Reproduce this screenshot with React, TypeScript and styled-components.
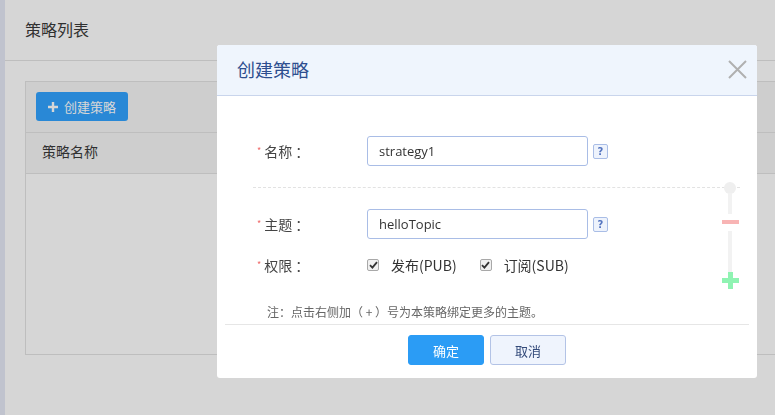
import { createGlobalStyle } from "styled-components";
import styled from "styled-components";

const GlobalStyle = createGlobalStyle`
  html, body {
    margin: 0;
    padding: 0;
    height: 100%;
    overflow: hidden;
  }
  body {
    font-family: "Noto Sans CJK SC", "Noto Sans", sans-serif;
    background: #fff;
    color: #333;
  }
  * {
    box-sizing: border-box;
  }
`;

const Page = styled.div`
  display: flex;
  width: 100vw;
  height: 100vh;
  overflow: hidden;
`;

const SideStripe = styled.div`
  flex: 0 0 5px;
  background: #e5e9f6;
`;

const Main = styled.main`
  flex: 1;
  display: flex;
  flex-direction: column;
`;

const PageHeader = styled.header`
  height: 61px;
  padding-left: 20px;
  display: flex;
  align-items: center;
  border-bottom: 1px solid #e3e3e3;
  font-size: 16px;
  color: #3a3a3a;
  padding-bottom: 2px;
`;

const Content = styled.div`
  padding: 20px 0 0 20px;
`;

const TableBox = styled.div`
  margin-right: -20px;
  height: 274px;
  border: 1px solid #e3e3e3;
`;

const Toolbar = styled.div`
  height: 51px;
  padding: 10px 10px;
  background: #f6f6f6;
  border-bottom: 1px solid #e3e3e3;
`;

const CreateButton = styled.button`
  height: 29px;
  width: 92px;
  border: none;
  border-radius: 3px;
  background: #32a3ff;
  color: #fff;
  font-family: inherit;
  font-size: 13px;
  display: flex;
  align-items: center;
  gap: 6px;
  padding: 0 0 0 12px;
`;

const HeadRow = styled.div`
  height: 41px;
  padding: 0 0 5px 16px;
  display: flex;
  align-items: center;
  background: #f6f6f6;
  border-bottom: 1px solid #e3e3e3;
  font-size: 14px;
  color: #3a3a3a;
`;

const Overlay = styled.div`
  position: fixed;
  inset: 0;
  background: rgba(0, 0, 0, 0.16);
`;

const Modal = styled.div`
  position: fixed;
  left: 217px;
  top: 45px;
  width: 540px;
  height: 333px;
  background: #fff;
  border-radius: 3px;
  display: flex;
  flex-direction: column;
  overflow: hidden;
`;

const ModalHeader = styled.div`
  height: 51px;
  flex: 0 0 51px;
  background: #eff5fd;
  border-bottom: 1px solid #c9d5ec;
  display: flex;
  align-items: center;
  justify-content: space-between;
  padding: 0 10px 2px 20px;
`;

const ModalTitle = styled.div`
  font-size: 18px;
  color: #2d4e8f;
`;

const ModalBody = styled.div`
  flex: 1;
  padding: 40px 17px 0 36px;
`;

const FormRow = styled.div<{ $h?: number; $gap?: number }>`
  display: flex;
  align-items: center;
  height: ${(p) => p.$h ?? 30}px;
  margin-top: ${(p) => p.$gap ?? 0}px;
  padding-left: 4px;
`;

const Label = styled.div`
  flex: 0 0 110px;
  font-size: 14px;
  color: #444;
  display: flex;
  align-items: center;
  gap: 4px;
`;

const Star = styled.span`
  color: #f06a6a;
  font-size: 9px;
  margin-right: -1px;
  margin-top: -1px;
`;

const TextInput = styled.div`
  width: 221px;
  height: 30px;
  border: 1px solid #a9bde6;
  border-radius: 3px;
  padding: 0 11px;
  display: flex;
  align-items: center;
  font-family: "Open Sans", "Noto Sans", sans-serif;
  font-size: 13px;
  color: #333;
`;

const HelpBox = styled.span`
  margin-left: 5px;
  width: 15px;
  height: 15px;
  border: 1px solid #a9bde6;
  border-radius: 2px;
  background: #eef3fc;
  color: #5575c0;
  font-family: "DejaVu Sans", sans-serif;
  font-weight: bold;
  font-size: 10px;
  display: flex;
  align-items: center;
  justify-content: center;
`;

const TopicGroup = styled.div`
  position: relative;
  margin-top: 21px;
  padding-top: 21px;
  border-top: 1px dashed #e2e2e2;
`;

const Stepper = styled.svg`
  position: absolute;
  right: 0;
  top: -7px;
`;

const Checks = styled.div`
  display: flex;
  align-items: center;
`;

const CheckItem = styled.label`
  display: flex;
  align-items: center;
  gap: 12px;
  margin-right: 23px;
  font-size: 14px;
  color: #333;
`;

const Tick = styled.span`
  width: 12px;
  height: 12px;
  border: 1px solid #a8a8a8;
  border-radius: 2px;
  background: #f0f0f0;
  display: flex;
  align-items: center;
  justify-content: center;
`;

const Note = styled.div`
  margin-top: 28px;
  padding-left: 14px;
  font-size: 12px;
  color: #666;
`;

const Footer = styled.div`
  margin: 0 8px;
  padding: 10px 0 13px;
  border-top: 1px solid #e6e6e6;
  display: flex;
  justify-content: center;
  gap: 6px;
`;

const FooterButton = styled.button<{ $primary?: boolean }>`
  width: 76px;
  height: 30px;
  border-radius: 3px;
  font-family: inherit;
  font-size: 13px;
  border: 1px solid ${(p) => (p.$primary ? "#2b9cf5" : "#b3c3e6")};
  background: ${(p) => (p.$primary ? "#2b9cf5" : "#eff4fd")};
  color: ${(p) => (p.$primary ? "#fff" : "#334a7a")};
`;

function CheckMark() {
  return (
    <svg width="9" height="8" viewBox="0 0 9 8">
      <path d="M1 4.2 L3.4 6.6 L8 1.2" stroke="#333" strokeWidth="1.8" fill="none" />
    </svg>
  );
}

export default function App() {
  return (
    <>
      <GlobalStyle />
      <Page>
        <SideStripe />
        <Main>
          <PageHeader>策略列表</PageHeader>
          <Content>
            <TableBox>
              <Toolbar>
                <CreateButton>
                  <svg width="10" height="10" viewBox="0 0 10 10">
                    <path d="M5 0 V10 M0 5 H10" stroke="#fff" strokeWidth="2.4" />
                  </svg>
                  创建策略
                </CreateButton>
              </Toolbar>
              <HeadRow>策略名称</HeadRow>
            </TableBox>
          </Content>
        </Main>
      </Page>
      <Overlay />
      <Modal>
        <ModalHeader>
          <ModalTitle>创建策略</ModalTitle>
          <svg width="19" height="19" viewBox="0 0 19 19">
            <path d="M1 1 L18 18 M18 1 L1 18" stroke="#b0b0b0" strokeWidth="2" />
          </svg>
        </ModalHeader>
        <ModalBody>
          <FormRow>
            <Label>
              <Star>*</Star>名称 ：
            </Label>
            <TextInput>strategy1</TextInput>
            <HelpBox>?</HelpBox>
          </FormRow>
          <TopicGroup>
            <Stepper width="20" height="110" viewBox="0 0 20 110">
              <circle cx="10" cy="7" r="6" fill="#efefef" />
              <rect x="8" y="12" width="4" height="21" fill="#f2f2f2" />
              <rect x="2" y="39" width="17" height="4" fill="#f8b4b4" />
              <rect x="8" y="50" width="4" height="42" fill="#f2f2f2" />
              <rect x="2" y="97" width="17" height="5" fill="#8ff3b2" />
              <rect x="8" y="91" width="5" height="17" fill="#8ff3b2" />
            </Stepper>
            <FormRow>
              <Label>
                <Star>*</Star>主题 ：
              </Label>
              <TextInput>helloTopic</TextInput>
              <HelpBox>?</HelpBox>
            </FormRow>
            <FormRow $h={20} $gap={16}>
              <Label>
                <Star>*</Star>权限 ：
              </Label>
              <Checks>
                <CheckItem>
                  <Tick>
                    <CheckMark />
                  </Tick>
                  发布(PUB)
                </CheckItem>
                <CheckItem>
                  <Tick>
                    <CheckMark />
                  </Tick>
                  订阅(SUB)
                </CheckItem>
              </Checks>
            </FormRow>
            <Note>注：点击右侧加（ + ）号为本策略绑定更多的主题。</Note>
          </TopicGroup>
        </ModalBody>
        <Footer>
          <FooterButton $primary>确定</FooterButton>
          <FooterButton>取消</FooterButton>
        </Footer>
      </Modal>
    </>
  );
}
